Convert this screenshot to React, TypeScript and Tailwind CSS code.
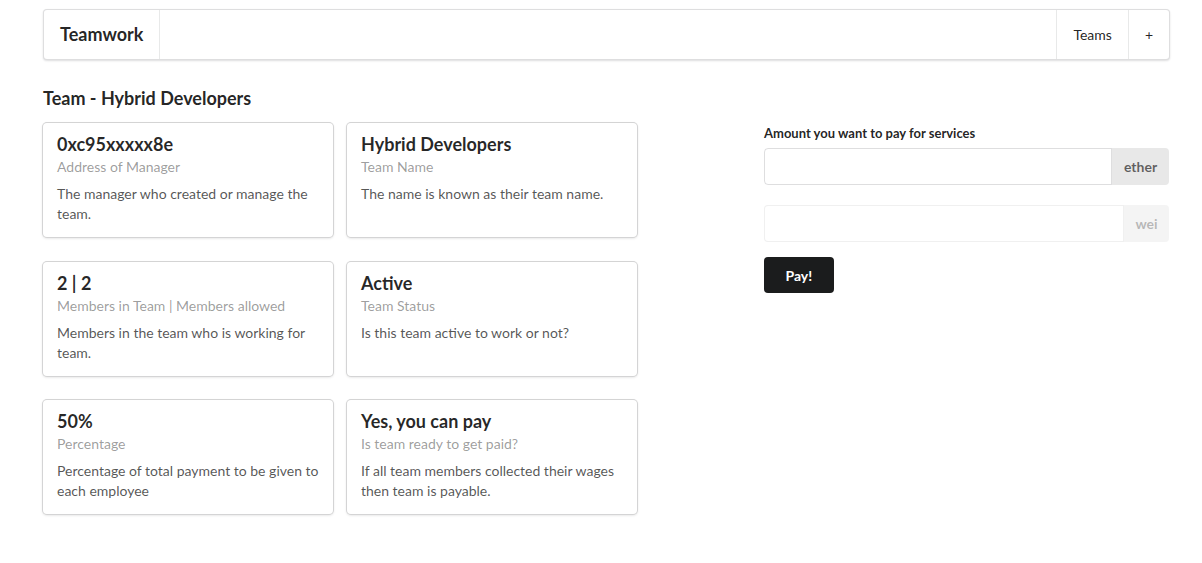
import React from "react";

const cards = [
  {
    header: "0xc95xxxxx8e",
    meta: "Address of Manager",
    desc: "The manager who created or manage the team.",
  },
  {
    header: "Hybrid Developers",
    meta: "Team Name",
    desc: "The name is known as their team name.",
  },
  {
    header: "2 | 2",
    meta: "Members in Team | Members allowed",
    desc: "Members in the team who is working for team.",
  },
  {
    header: "Active",
    meta: "Team Status",
    desc: "Is this team active to work or not?",
  },
  {
    header: "50%",
    meta: "Percentage",
    desc: "Percentage of total payment to be given to each employee",
  },
  {
    header: "Yes, you can pay",
    meta: "Is team ready to get paid?",
    desc: "If all team members collected their wages then team is payable.",
  },
];

const Card = ({ header, meta, desc }: { header: string; meta: string; desc: string }) => (
  <div className="w-[290px] rounded-[4px] bg-white px-[14px] pt-[14px] pb-[13px] shadow-[0_1px_3px_0_#d4d4d5,0_0_0_1px_#d4d4d5]">
    <div className="mt-[-4px] text-[18px] font-bold leading-[23px] text-[rgba(0,0,0,0.85)]">{header}</div>
    <div className="mt-[1px] text-[14px] leading-[20px] text-[rgba(0,0,0,0.4)]">{meta}</div>
    <p className="mt-[7px] text-[14px] leading-[20px] text-[rgba(0,0,0,0.68)]">{desc}</p>
  </div>
);

const App = () => {
  return (
    <div className="min-h-[563px] bg-white font-['Lato',sans-serif] text-[14px] text-[rgba(0,0,0,0.87)]">
      <div className="ml-[43px] w-[1127px] pt-[9px]">
        <div className="flex h-[51px] items-stretch rounded-[4px] border border-[rgba(34,36,38,0.15)] bg-white shadow-[0_1px_2px_0_rgba(34,36,38,0.15)]">
          <div className="flex items-center border-r border-[rgba(34,36,38,0.1)] px-[16px] text-[18px] font-bold">
            Teamwork
          </div>
          <div className="flex-1" />
          <div className="flex items-center border-l border-[rgba(34,36,38,0.1)] px-[16px]">Teams</div>
          <div className="flex items-center border-l border-[rgba(34,36,38,0.1)] px-[16px]">+</div>
        </div>

        <h3 className="mt-[27px] text-[18px] font-bold leading-[23px] text-[rgba(0,0,0,0.87)]">
          Team - Hybrid Developers
        </h3>

        <div className="mt-[13px] flex">
          <div className="w-[708px]">
            <div className="grid w-[594px] grid-cols-[290px_290px] gap-x-[14px] gap-y-[24.5px]">
              {cards.map((c) => (
                <Card key={c.header} {...c} />
              ))}
            </div>
          </div>
          <div className="ml-[13px] w-[405px]">
            <label className="block pt-[1px] text-[13px] font-bold leading-[18px] text-[rgba(0,0,0,0.87)]">
              Amount you want to pay for services
            </label>
            <div className="mt-[6px] flex h-[37px]">
              <input
                className="min-w-0 flex-1 rounded-l-[4px] border border-[rgba(34,36,38,0.15)] px-[14px] outline-none"
                type="text"
              />
              <div className="flex w-[57px] items-center justify-center rounded-r-[4px] bg-[#e8e8e8] font-bold text-[rgba(0,0,0,0.6)]">
                ether
              </div>
            </div>
            <div className="mt-[20px] flex h-[37px] opacity-45">
              <input
                disabled
                className="min-w-0 flex-1 rounded-l-[4px] border border-[rgba(34,36,38,0.15)] bg-white px-[14px] outline-none"
                type="text"
              />
              <div className="flex w-[45px] items-center justify-center rounded-r-[4px] bg-[#e8e8e8] font-bold text-[rgba(0,0,0,0.6)]">
                wei
              </div>
            </div>
            <button className="mt-[15px] h-[36px] rounded-[4px] bg-[#1b1c1d] px-[21.5px] font-bold text-white">
              Pay!
            </button>
          </div>
        </div>
      </div>
    </div>
  );
};

export default App;
